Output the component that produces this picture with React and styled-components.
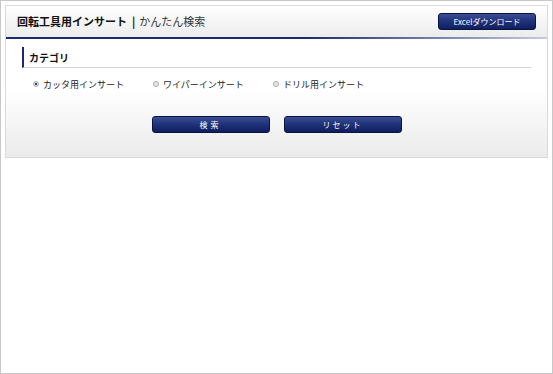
import React, { useState } from "react";
import styled, { createGlobalStyle } from "styled-components";

const Global = createGlobalStyle`
  html, body { margin: 0; padding: 0; background: #fff; }
  body { font-family: "Noto Sans CJK JP", "Noto Sans", sans-serif; color: #222; }
  #root { width: 553px; height: 374px; }
`;

const Frame = styled.div`
  box-sizing: border-box;
  width: 553px;
  height: 374px;
  border: 1px solid #c8c8c8;
  padding: 4px;
`;

const Panel = styled.section`
  border: 1px solid #dadada;
  background: linear-gradient(#ffffff 0%, #ffffff 55%, #ebebeb 100%);
`;

const Header = styled.header`
  height: 31px;
  display: flex;
  align-items: center;
  justify-content: space-between;
  padding: 0 11px 0 11px;
  background: linear-gradient(#ffffff, #ececec);
  border-bottom: 2px solid transparent;
  border-image: linear-gradient(to right, #1a2a6c 0%, #1a2a6c 55%, #c5cbe0 100%) 1;
`;

const Title = styled.h1`
  margin: 0;
  font-size: 11px;
  font-weight: 700;
  color: #111;
  line-height: 1;
  display: flex;
  align-items: center;
`;

const Sep = styled.span`
  margin: 0 4px 0 5px;
`;

const Sub = styled.span`
  font-weight: 400;
  color: #333;
`;

const NavyButton = styled.button`
  box-sizing: border-box;
  width: ${(p) => p.$w}px;
  height: 17px;
  padding: 0;
  border: 1px solid #0a1440;
  border-radius: 3px;
  background: linear-gradient(#3a4d94 0%, #1f3179 50%, #0f1e5e 100%);
  color: #fff;
  font-family: "Noto Sans CJK JP", "Noto Sans", sans-serif;
  font-size: 8px;
  letter-spacing: ${(p) => p.$ls || 0}px;
  line-height: 15px;
  cursor: pointer;
`;

const Body = styled.div`
  padding: 8px 16px 24px 16px;
`;

const SectionHead = styled.h2`
  margin: 0;
  height: 20px;
  display: flex;
  align-items: center;
  padding-left: 5px;
  border-left: 2px solid #1a2a6c;
  border-bottom: 1px solid #d4d4d4;
  font-size: 10px;
  font-weight: 700;
  color: #111;
`;

const RadioRow = styled.div`
  display: flex;
  padding: 7px 0 0 11px;
  height: 18px;
  align-items: center;
`;

const RadioItem = styled.label`
  width: 120px;
  display: flex;
  align-items: center;
  font-size: 9px;
  color: #222;
  cursor: pointer;
`;

const Dot = styled.span`
  box-sizing: border-box;
  width: 6px;
  height: 6px;
  border-radius: 50%;
  margin-right: 4px;
  border: 1px solid #aaa;
  background: ${(p) => (p.$on ? "radial-gradient(circle, #2a3c86 0 45%, #e6e6e6 55%)" : "#e8e8e8")};
`;

const ButtonRow = styled.div`
  display: flex;
  justify-content: center;
  gap: 14px;
  margin-top: 23px;
`;

const options = ["カッタ用インサート", "ワイパーインサート", "ドリル用インサート"];

export default function App() {
  const [sel, setSel] = useState(0);
  return (
    <>
      <Global />
      <Frame>
        <Panel>
          <Header>
            <Title>
              回転工具用インサート<Sep>|</Sep><Sub>かんたん検索</Sub>
            </Title>
            <NavyButton $w={98}>Excelダウンロード</NavyButton>
          </Header>
          <Body>
            <SectionHead>カテゴリ</SectionHead>
            <RadioRow>
              {options.map((o, i) => (
                <RadioItem key={o} onClick={() => setSel(i)}>
                  <Dot $on={sel === i} />
                  {o}
                </RadioItem>
              ))}
            </RadioRow>
            <ButtonRow>
              <NavyButton $w={118} $ls={3}>検索</NavyButton>
              <NavyButton $w={118} $ls={2}>リセット</NavyButton>
            </ButtonRow>
          </Body>
        </Panel>
      </Frame>
    </>
  );
}
